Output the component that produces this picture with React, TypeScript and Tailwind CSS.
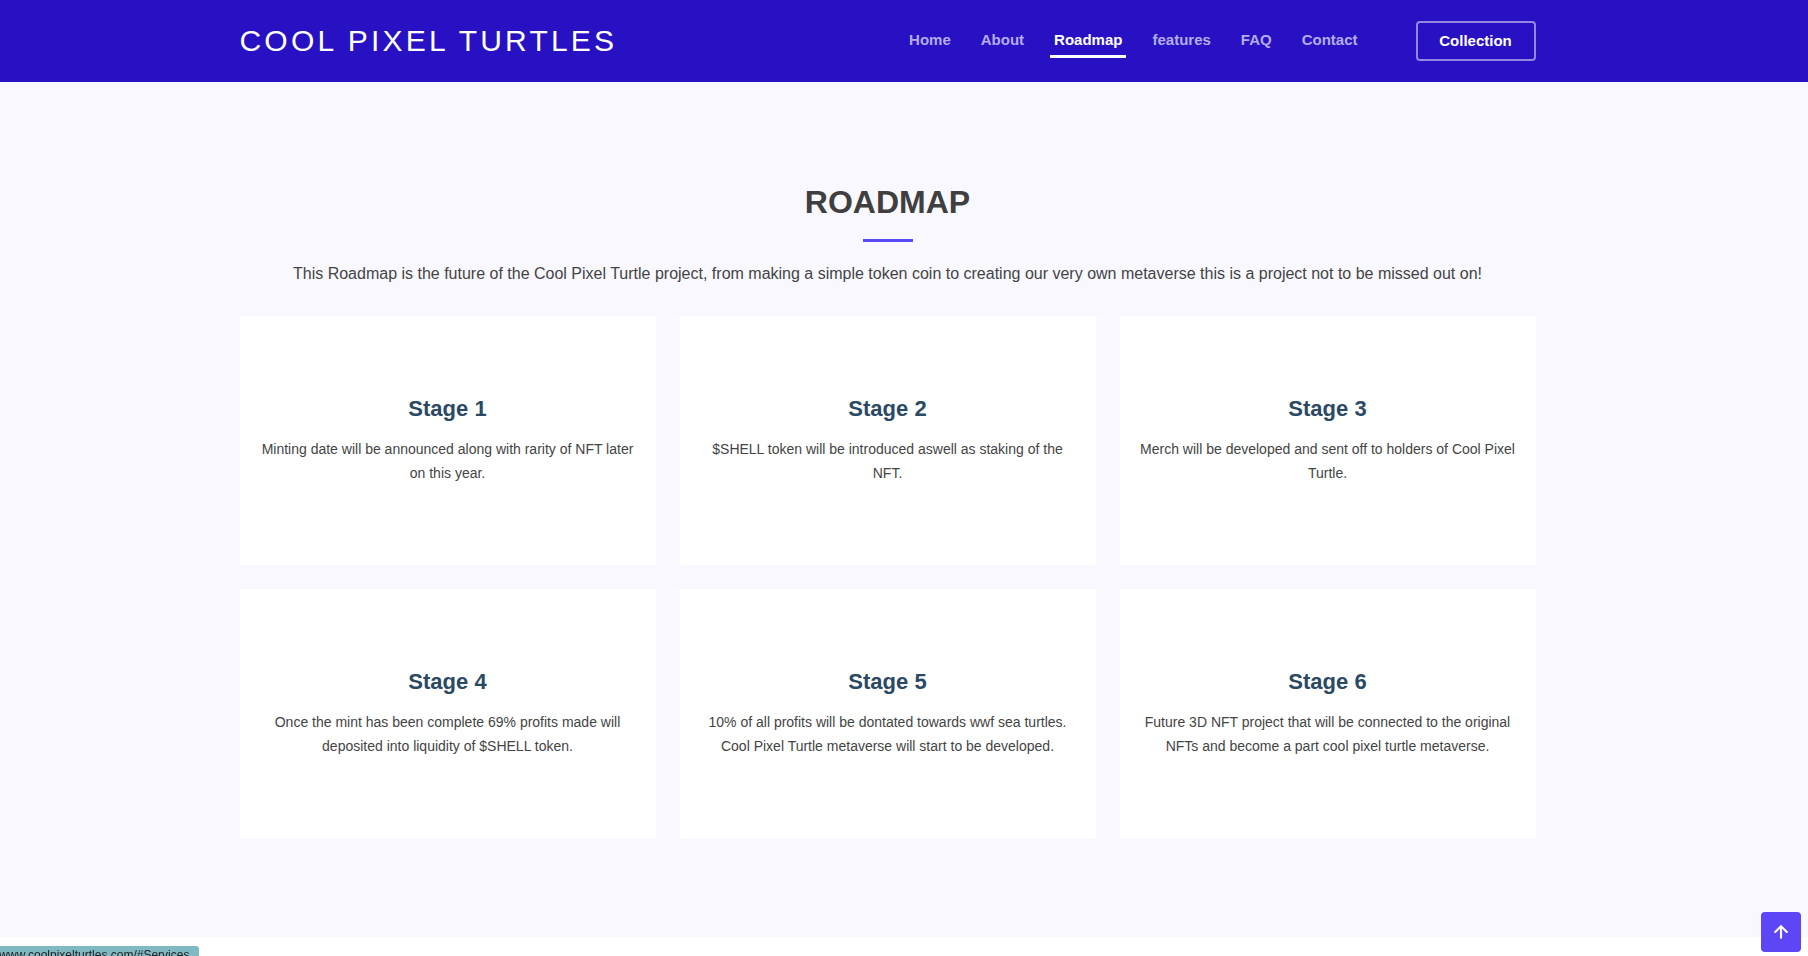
import { ArrowUp } from 'lucide-react';

const navLinks = ['Home', 'About', 'Roadmap', 'features', 'FAQ', 'Contact'];

const stages = [
  {
    title: 'Stage 1',
    text: 'Minting date will be announced along with rarity of NFT later on this year.',
  },
  {
    title: 'Stage 2',
    text: '$SHELL token will be introduced aswell as staking of the NFT.',
  },
  {
    title: 'Stage 3',
    text: 'Merch will be developed and sent off to holders of Cool Pixel Turtle.',
  },
  {
    title: 'Stage 4',
    text: 'Once the mint has been complete 69% profits made will deposited into liquidity of $SHELL token.',
  },
  {
    title: 'Stage 5',
    text: '10% of all profits will be dontated towards wwf sea turtles. Cool Pixel Turtle metaverse will start to be developed.',
  },
  {
    title: 'Stage 6',
    text: 'Future 3D NFT project that will be connected to the original NFTs and become a part cool pixel turtle metaverse.',
  },
];

function Header() {
  return (
    <header className="bg-[#2811c3] h-[82px]">
      <div className="pr-[33px] h-full">
        <div className="mx-auto w-[1296px] h-full flex items-center">
          <a className="text-white text-[30px] tracking-[3.2px] leading-none font-normal">
            COOL PIXEL TURTLES
          </a>
          <nav className="ml-auto flex items-center pb-[3px]">
            <ul className="flex items-center gap-[30px]">
              {navLinks.map((link) => (
                <li key={link} className="relative">
                  <a
                    className={
                      link === 'Roadmap'
                        ? 'text-white text-[15px] font-bold leading-[18px]'
                        : 'text-[#b4acea] text-[15px] font-bold leading-[18px]'
                    }
                  >
                    {link}
                  </a>
                  {link === 'Roadmap' && (
                    <span className="absolute left-[-4px] right-[-4px] -bottom-[6px] h-[3px] bg-white" />
                  )}
                </li>
              ))}
            </ul>
          </nav>
          <a className="ml-[58px] w-[120px] h-[40px] flex items-center justify-center rounded-[4px] border-2 border-[#9388e1] text-white text-[15px] font-bold">
            Collection
          </a>
        </div>
      </div>
    </header>
  );
}

function StageCard({ title, text }: { title: string; text: string }) {
  return (
    <div className="bg-white h-[249px] pt-[80px] px-[20px] text-center">
      <h4 className="text-[22px] leading-[26px] font-bold text-[#2c4964] mb-[15px]">
        {title}
      </h4>
      <p className="text-[14px] leading-[24px] text-[#444444]">{text}</p>
    </div>
  );
}

export default function App() {
  return (
    <div
      className="min-h-screen bg-white"
      style={{ fontFamily: '"Liberation Sans", Arial, sans-serif' }}
    >
      <Header />

      <section className="bg-[#f8f8fe] pt-[101px] pb-[99px]">
        <div className="pr-[33px]">
          <div className="mx-auto w-[1296px]">
            <div className="text-center">
              <h2 className="text-[32px] leading-[38px] font-bold text-[#3f3f3f]">ROADMAP</h2>
              <div className="mx-auto mt-[18px] w-[50px] h-[3px] bg-[#5a4af5]" />
              <p className="mt-[20px] text-[16px] leading-[24px] text-[#444444]">
                This Roadmap is the future of the Cool Pixel Turtle project, from making a simple token coin
                to creating our very own metaverse this is a project not to be missed out on!
              </p>
            </div>

            <div className="mt-[30px] grid grid-cols-3 gap-6">
              {stages.map((s) => (
                <StageCard key={s.title} title={s.title} text={s.text} />
              ))}
            </div>
          </div>
        </div>
      </section>

      <a className="fixed right-[7px] bottom-[4px] w-10 h-10 rounded-[4px] bg-[#5c46f6] flex items-center justify-center">
        <ArrowUp size={20} strokeWidth={2.5} color="#ffffff" />
      </a>

      <div className="fixed left-0 bottom-0 h-[10px] w-[199px] bg-[#80b9c2] rounded-tr-[3px] overflow-hidden">
        <span className="block -ml-[4px] pt-[2px] text-[12px] leading-[14px] text-[#202124] whitespace-nowrap">
          /www.coolpixelturtles.com/#Services
        </span>
      </div>
    </div>
  );
}
